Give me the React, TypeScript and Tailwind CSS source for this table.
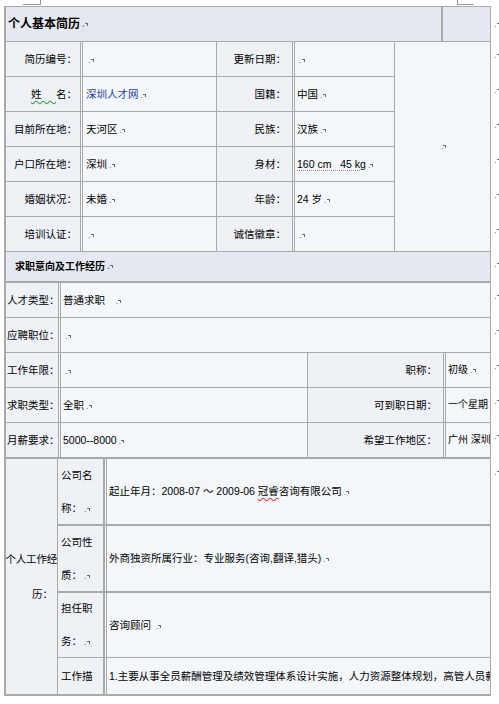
import React from "react"

const line = "border-[#a9a9a9]"

function Pm() {
  return (
    <span className="inline-flex items-end ml-[2px] text-[#6b6b6b] leading-none">
      <span className="text-[9px] leading-none">.</span>
      <span className="w-[3px] h-[3px] border-t border-r border-[#6b6b6b] mb-[3px]" />
    </span>
  )
}

function Label({ children, align = "right", className = "" }: { children: React.ReactNode; align?: "right" | "left"; className?: string }) {
  return (
    <div
      className={`flex items-center overflow-hidden whitespace-nowrap border-b ${line} bg-[#eef2f7] ${
        align === "right" ? "justify-end pr-[3px]" : "pl-[1px]"
      } ${className}`}
    >
      <span>{children}</span>
    </div>
  )
}

function Value({ children, className = "" }: { children?: React.ReactNode; className?: string }) {
  return (
    <div
      className={`flex items-center overflow-hidden whitespace-nowrap border-b border-r border-l-[3px] border-double ${line} bg-[#f4f7fa] pl-[2px] ${className}`}
    >
      <span>{children}</span>
    </div>
  )
}

const basic = [
  ["简历编号：", null, "更新日期：", null],
  [
    <>
      <span className="underline decoration-wavy decoration-[#3c9a3c] underline-offset-2">姓&nbsp;&nbsp;&nbsp;&nbsp;&nbsp;</span>名：
    </>,
    <span className="text-[#1f3f94]">深圳人才网</span>,
    "国籍：",
    "中国",
  ],
  ["目前所在地：", "天河区", "民族：", "汉族"],
  [
    "户口所在地：",
    "深圳",
    "身材：",
    <span className="underline decoration-dotted decoration-[#e06aa0] underline-offset-2">160 cm&nbsp;&nbsp; 45 kg</span>,
  ],
  ["婚姻状况：", "未婚", "年龄：", "24 岁"],
  ["培训认证：", null, "诚信徽章：", null],
]

const wish: [string, string, string, string][] = [
  ["工作年限：", "", "职称：", "初级"],
  ["求职类型：", "全职", "可到职日期：", "一个星期"],
  ["月薪要求：", "5000--8000", "希望工作地区：", "广州 深圳"],
]

const jobs: [string, string, React.ReactNode][] = [
  [
    "公司名",
    "称：",
    <>
      起止年月：2008-07 ～ 2009-06{" "}
      <span className="underline decoration-wavy decoration-[#d33] underline-offset-2">冠睿</span>咨询有限公司
    </>,
  ],
  ["公司性", "质：", "外商独资所属行业：专业服务(咨询,翻译,猎头)"],
  ["担任职", "务：", "咨询顾问 "],
]

export default function App() {
  return (
    <div className="w-[499px] h-[704px] overflow-hidden bg-white text-black text-[10.5px] leading-none font-['Liberation_Sans','Noto_Sans_CJK_SC',sans-serif]">
      {/* page corner marks */}
      <div className="flex h-[6px]">
        <div className="ml-[23px] w-[18px] h-[5px] border-b border-r border-[#9a9a9a]" />
        <div className="ml-[416px] w-[17px] h-[5px] border-b border-l border-[#9a9a9a]" />
      </div>

      <div className="flex">
        <div className={`ml-[4px] w-[487px] flex flex-col border-l-2 border-t border-b-2 ${line}`}>
          {/* title */}
          <div className="grid grid-cols-[437px_48px] h-[35px]">
            <div className={`flex items-center pl-[2px] border-b border-r-2 ${line} bg-[#e4e9f1] text-[12px] font-bold`}>
              个人基本简历<Pm />
            </div>
            <div className={`border-b border-r ${line} bg-[#e4e9f1]`} />
          </div>

          {/* basic info */}
          <div className="grid grid-cols-[74px_137px_75px_103px_96px] grid-rows-[repeat(6,35px)]">
            {basic.map((r, i) => (
              <React.Fragment key={i}>
                <Label>{r[0]}</Label>
                <Value className="pl-[3px]">
                  {r[1]}
                  <Pm />
                </Value>
                <Label className="pr-[6px]">{r[2]}</Label>
                <Value>
                  {r[3]}
                  <Pm />
                </Value>
                {i === 0 && (
                  <div className={`row-span-6 col-start-5 flex items-center justify-center border-b border-r ${line} bg-[#f4f7fa]`}>
                    <Pm />
                  </div>
                )}
              </React.Fragment>
            ))}
          </div>

          {/* section title */}
          <div className={`flex items-center h-[31px] pl-[9px] border-b-2 border-r ${line} bg-[#e4e9f1] text-[10px] font-bold`}>
            求职意向及工作经历<Pm />
          </div>

          {/* job wishes */}
          <div className="grid grid-cols-[52px_250px_135px_48px] grid-rows-[repeat(5,35px)]">
            <Label align="left">人才类型：</Label>
            <Value className="col-span-3">
              普通求职&nbsp;&nbsp;&nbsp;
              <Pm />
            </Value>
            <Label align="left">应聘职位：</Label>
            <Value className="col-span-3">
              <Pm />
            </Value>
            {wish.map((r, i) => (
              <React.Fragment key={i}>
                <Label align="left">{r[0]}</Label>
                <Value>
                  {r[1]}
                  <Pm />
                </Value>
                <Label className="pr-[6px]">{r[2]}</Label>
                <Value className="pl-0 text-[10px]">
                  {r[3]}
                  {i === 0 && <Pm />}
                </Value>
              </React.Fragment>
            ))}
          </div>

          {/* work experience */}
          <div className="grid grid-cols-[52px_46px_387px] grid-rows-[67px_67px_66px_36px]">
            <div className={`row-span-4 flex flex-col justify-center items-end whitespace-nowrap leading-[35px] border-r border-t ${line} bg-[#eef2f7]`}>
              <span className="tracking-[-0.2px]">个人工作经</span>
              <span className="pr-[4px]">历：</span>
            </div>
            {jobs.map((r, i) => (
              <React.Fragment key={i}>
                <div className={`flex flex-col justify-center pl-[3px] leading-[33px] border-b border-r border-t ${line} bg-[#eef2f7]`}>
                  <span>{r[0]}</span>
                  <span>
                    {r[1]}
                    <Pm />
                  </span>
                </div>
                <Value className="border-t">
                  {r[2]}
                  <Pm />
                </Value>
              </React.Fragment>
            ))}
            <div className={`flex items-center pl-[3px] border-r ${line} bg-[#eef2f7]`}>工作描</div>
            <Value className="border-b-0">
              1.主要从事全员薪酬管理及绩效管理体系设计实施，人力资源整体规划，高管人员薪酬激励
            </Value>
          </div>
        </div>

        {/* end-of-row marks */}
        <div className="flex flex-col w-[8px] pl-[1px]">
          <div className="h-[36px] flex items-center">
            <Pm />
          </div>
          {[0, 1, 2, 3, 4, 5].map((i) => (
            <div key={i} className="h-[35px] flex items-center pb-[8px]">
              <Pm />
            </div>
          ))}
          <div className="h-[31px] flex items-center pb-[6px]">
            <Pm />
          </div>
          {[0, 1, 2, 3, 4].map((i) => (
            <div key={i} className="h-[35px] flex items-center pb-[8px]">
              <Pm />
            </div>
          ))}
          <div className="pt-[8px]">
            <Pm />
          </div>
        </div>
      </div>
    </div>
  )
}
